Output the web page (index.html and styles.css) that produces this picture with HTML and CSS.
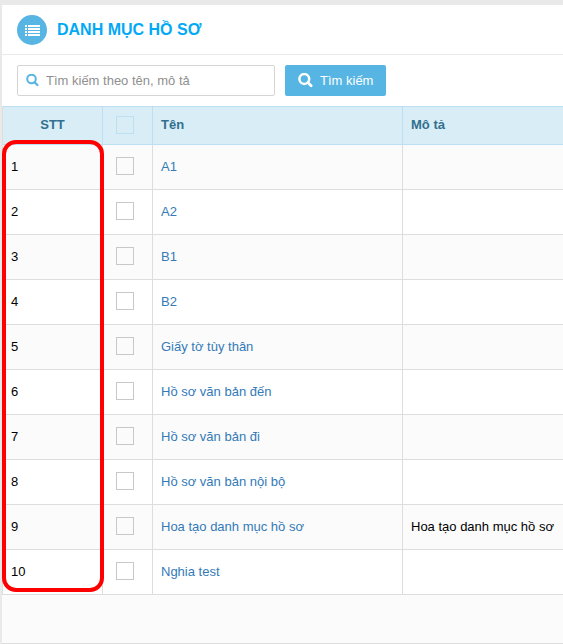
FILE: index.html
```html
<!DOCTYPE html>
<html lang="vi">
<head>
<meta charset="utf-8">
<title>Danh mục hồ sơ</title>
<link rel="stylesheet" href="styles.css">
</head>
<body>
<main class="panel">
  <header class="panel-header">
    <span class="panel-icon">
      <svg width="16" height="12" viewBox="-1 -1 16 12" fill="#fff" aria-hidden="true">
        <path d="M0 0h2v2H0zM3 0h12v2H3zM0 3h2v2H0zM3 3h12v2H3zM0 6h2v2H0zM3 6h12v2H3zM0 9h2v2H0zM3 9h12v2H3z"/>
      </svg>
    </span>
    <h1 class="panel-title">DANH MỤC HỒ SƠ</h1>
  </header>
  <form class="search">
    <label class="search-field">
      <svg class="search-icon" width="13" height="13" viewBox="0 0 13 13" fill="none" stroke="#57b5e3" aria-hidden="true">
        <circle cx="5.5" cy="5" r="4.3" stroke-width="2"/>
        <path d="M8.6 8.2l2.8 2.8" stroke-width="2.3" stroke-linecap="round"/>
      </svg>
      <input class="search-input" type="text" aria-label="Tìm kiếm" placeholder="Tìm kiếm theo tên, mô tả">
    </label>
    <button class="search-button" type="button">
      <svg width="15" height="15" viewBox="0 0 15 15" fill="none" stroke="#fff" aria-hidden="true">
        <circle cx="6.3" cy="6" r="4.9" stroke-width="2.5"/>
        <path d="M9.9 9.6l3.2 3.2" stroke-width="2.8" stroke-linecap="round"/>
      </svg>
      Tìm kiếm
    </button>
  </form>
  <div class="table-area">
    <table class="records">
      <colgroup><col class="col-index"><col class="col-check"><col class="col-name"><col></colgroup>
      <thead>
        <tr><th class="center">STT</th><th class="check"><input type="checkbox" aria-label="Chọn tất cả"></th><th>Tên</th><th>Mô tả</th></tr>
      </thead>
      <tbody>
        <tr><td>1</td><td class="check"><input type="checkbox" aria-label="A1"></td><td><a href="#">A1</a></td><td></td></tr>
        <tr><td>2</td><td class="check"><input type="checkbox" aria-label="A2"></td><td><a href="#">A2</a></td><td></td></tr>
        <tr><td>3</td><td class="check"><input type="checkbox" aria-label="B1"></td><td><a href="#">B1</a></td><td></td></tr>
        <tr><td>4</td><td class="check"><input type="checkbox" aria-label="B2"></td><td><a href="#">B2</a></td><td></td></tr>
        <tr><td>5</td><td class="check"><input type="checkbox" aria-label="Giấy tờ tùy thân"></td><td><a href="#">Giấy tờ tùy thân</a></td><td></td></tr>
        <tr><td>6</td><td class="check"><input type="checkbox" aria-label="Hồ sơ văn bản đến"></td><td><a href="#">Hồ sơ văn bản đến</a></td><td></td></tr>
        <tr><td>7</td><td class="check"><input type="checkbox" aria-label="Hồ sơ văn bản đi"></td><td><a href="#">Hồ sơ văn bản đi</a></td><td></td></tr>
        <tr><td>8</td><td class="check"><input type="checkbox" aria-label="Hồ sơ văn bản nội bộ"></td><td><a href="#">Hồ sơ văn bản nội bộ</a></td><td></td></tr>
        <tr><td>9</td><td class="check"><input type="checkbox" aria-label="Hoa tạo danh mục hồ sơ"></td><td><a href="#">Hoa tạo danh mục hồ sơ</a></td><td>Hoa tạo danh mục hồ sơ</td></tr>
        <tr><td>10</td><td class="check"><input type="checkbox" aria-label="Nghia test"></td><td><a href="#">Nghia test</a></td><td></td></tr>
      </tbody>
    </table>
    <div class="highlight"></div>
  </div>
  <footer class="panel-footer"></footer>
</main>
</body>
</html>
```

FILE: styles.css
```css
* {
  box-sizing: border-box;
}

body {
  margin: 0;
  padding: 5px 0 0 2px;
  background: #e9e9e9;
  color: #000;
  font: 13px/20px "Liberation Sans", Arial, sans-serif;
}

.panel {
  background: #fff;
}

.panel-header {
  display: flex;
  align-items: center;
  gap: 10px;
  height: 50px;
  padding: 0 15px;
  border-bottom: 1px solid #e9e9e9;
}

.panel-icon {
  display: flex;
  align-items: center;
  justify-content: center;
  width: 30px;
  height: 30px;
  border-radius: 50%;
  background: #57b5e3;
}

.panel-title {
  margin: 0;
  color: #03a9f4;
  font-size: 16px;
  line-height: 20px;
}

.search {
  display: flex;
  gap: 10px;
  padding: 10px 15px;
}

.search-field {
  display: flex;
  align-items: center;
  gap: 7px;
  width: 258px;
  height: 31px;
  padding: 0 8px;
  border: 1px solid #d5d5d5;
  border-radius: 2px;
}

.search-icon {
  flex: none;
}

.search-input {
  flex: 1;
  min-width: 0;
  padding: 0;
  border: 0;
  outline: 0;
  background: none;
  font: inherit;
}

.search-input::placeholder {
  color: #8f8f8f;
  opacity: 1;
}

.search-button {
  display: flex;
  align-items: center;
  gap: 7px;
  height: 31px;
  padding: 0 13px;
  border: 0;
  border-radius: 2px;
  background: #57b5e3;
  color: #fff;
  font: inherit;
}

.table-area {
  position: relative;
}

.records {
  width: 100%;
  table-layout: fixed;
  border-collapse: separate;
  border-spacing: 0;
  border: solid #ddd;
  border-color: #bcdff1 #ddd #ddd;
  border-width: 1px 0 0 1px;
}

.col-index {
  width: 100px;
}

.col-check {
  width: 50px;
}

.col-name {
  width: 250px;
}

.records th,
.records td {
  height: 45px;
  padding: 0 8px;
  border: solid #ddd;
  border-width: 0 1px 1px 0;
  text-align: left;
  vertical-align: middle;
}

.records th {
  height: 38px;
  padding-bottom: 2px;
  border-color: #bcdff1;
  background: #d9edf7;
  color: #31708f;
}

.records th:last-child,
.records td:last-child {
  border-right: 0;
}

.records .center {
  text-align: center;
}

.records .check {
  padding: 0 13px 2px;
}

.records tbody tr:nth-child(odd) {
  background: #fbfbfb;
}

.records a {
  color: #337ab7;
  text-decoration: none;
}

.records input {
  display: block;
  width: 18px;
  height: 18px;
  margin: 0;
  appearance: none;
  border: 1px solid #c8c8c8;
}

.records th input {
  border-color: #bce0f2;
}

.highlight {
  position: absolute;
  top: 34px;
  bottom: 3px;
  left: 0;
  width: 102px;
  border: 4px solid #f00;
  border-radius: 14px;
}

.panel-footer {
  height: 49px;
  border-bottom: 1px solid #ddd;
  background: #fbfbfb;
}
```
